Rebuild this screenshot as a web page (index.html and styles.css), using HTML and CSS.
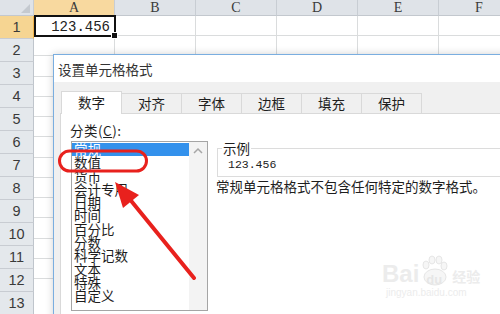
FILE: index.html
```html
<!DOCTYPE html>
<html lang="zh-CN">
<head>
    <meta charset="UTF-8">
    <meta name="viewport" content="width=device-width, initial-scale=1.0">
    <title>设置单元格格式</title>
    <link rel="stylesheet" href="styles.css">
</head>
<body>
    <!-- Worksheet behind the dialog -->
    <div class="sheet">
        <div class="corner"></div>
        <div class="colheads">
            <div class="colhead active">A</div>
            <div class="colhead">B</div>
            <div class="colhead">C</div>
            <div class="colhead">D</div>
            <div class="colhead">E</div>
            <div class="colhead">F</div>
        </div>
        <div class="rowheads">
            <div class="rowhead active">1</div>
            <div class="rowhead">2</div>
            <div class="rowhead">3</div>
            <div class="rowhead">4</div>
            <div class="rowhead">5</div>
            <div class="rowhead">6</div>
            <div class="rowhead">7</div>
            <div class="rowhead">8</div>
            <div class="rowhead">9</div>
            <div class="rowhead">10</div>
            <div class="rowhead">11</div>
            <div class="rowhead">12</div>
            <div class="rowhead">13</div>
            <div class="rowhead">14</div>
            <div class="rowhead">15</div>
        </div>
        <div class="cells">
            <div class="cell-sel">123.456<span class="handle"></span></div>
        </div>
    </div>

    <!-- Format cells dialog -->
    <div class="dialog">
        <div class="dlg-title">设置单元格格式</div>
        <div class="dlg-body">
            <div class="tabs">
                <div class="tab on">数字</div>
                <div class="tab">对齐</div>
                <div class="tab">字体</div>
                <div class="tab">边框</div>
                <div class="tab">填充</div>
                <div class="tab">保护</div>
            </div>
            <div class="panel">
                <div class="left-col">
                    <div class="label">分类(<u>C</u>):</div>
                    <div class="listbox">
                        <ul class="items">
                            <li class="sel">常规</li>
                            <li>数值</li>
                            <li>货币</li>
                            <li>会计专用</li>
                            <li>日期</li>
                            <li>时间</li>
                            <li>百分比</li>
                            <li>分数</li>
                            <li>科学记数</li>
                            <li>文本</li>
                            <li>特殊</li>
                            <li>自定义</li>
                        </ul>
                        <div class="scrollbar">
                            <svg width="18" height="16" viewBox="0 0 18 16">
                                <path d="M5 10 L9 6 L13 10" fill="none" stroke="#a6a6a6" stroke-width="1.5"/>
                            </svg>
                        </div>
                    </div>
                </div>
                <div class="right-col">
                    <fieldset class="sample">
                        <legend>示例</legend>
                        <div class="sample-val">123.456</div>
                    </fieldset>
                    <div class="desc">常规单元格格式不包含任何特定的数字格式。</div>
                </div>
            </div>
        </div>
    </div>

    <!-- Baidu watermark -->
    <div class="watermark">
        <div class="wm-top">
            <span class="wm-bai">Bai</span>
            <svg class="wm-paw" width="28" height="32" viewBox="0 0 28 32">
                <ellipse cx="6" cy="10" rx="3" ry="4" fill="#f6f6f6" stroke="#e6e6e6"/>
                <ellipse cx="12" cy="5" rx="3" ry="4" fill="#f6f6f6" stroke="#e6e6e6"/>
                <ellipse cx="19" cy="5" rx="3" ry="4" fill="#f6f6f6" stroke="#e6e6e6"/>
                <ellipse cx="24" cy="11" rx="3" ry="4" fill="#f6f6f6" stroke="#e6e6e6"/>
                <ellipse cx="15" cy="22" rx="11" ry="8" fill="#f6f6f6" stroke="#e6e6e6"/>
            </svg>
            <span class="wm-du">du</span>
            <span class="wm-jy">经验</span>
        </div>
        <div class="wm-url">jingyan.baidu.com</div>
    </div>

    <!-- Red annotation: ring round 数值 and the arrow pointing at it -->
    <svg class="marks" width="500" height="314" viewBox="0 0 500 314">
        <rect x="59.5" y="151" width="87" height="20" rx="10" ry="10" fill="none" stroke="#e8211d" stroke-width="3"/>
        <line x1="194" y1="278" x2="128" y2="197" stroke="#e8211d" stroke-width="4" stroke-linecap="round"/>
        <polygon points="115,182 139,195 123,208" fill="#e8211d"/>
    </svg>
</body>
</html>
```

FILE: styles.css
```css
body {
    margin: 0;
    padding: 0;
    overflow: hidden;
    background: #fff;
    width: 500px;
    height: 314px;
}

/* Worksheet */
.sheet {
    display: grid;
    grid-template-columns: 34px 1fr;
    grid-template-rows: 16px 1fr;
    height: 314px;
    overflow: hidden;
}

.corner {
    background: #dfe3e8;
    border-right: 1px solid #c8cdd3;
    border-bottom: 1px solid #c3c8ce;
    box-sizing: border-box;
    position: relative;
}

.corner::after {
    content: "";
    position: absolute;
    right: 3px;
    bottom: 2px;
    border-left: 9px solid transparent;
    border-bottom: 9px solid #c4c9cf;
}

.colheads {
    display: flex;
}

.colhead {
    flex: 0 0 81px;
    box-sizing: border-box;
    height: 16px;
    background: #dfe3e8;
    border-right: 1px solid #c8cdd3;
    border-bottom: 1px solid #c3c8ce;
    text-align: center;
    font-family: "Liberation Serif", serif;
    font-size: 14px;
    line-height: 16px;
    color: #3a3a3a;
}

.colhead.active {
    background: #f8d99f;
    border-bottom-color: #f0b24a;
}

.rowheads {
    display: flex;
    flex-direction: column;
}

.rowhead {
    flex: 0 0 20.25px;
    box-sizing: border-box;
    background: #e4e8ec;
    border-right: 1px solid #bfc5cc;
    border-bottom: 1px solid #c8ccd2;
    text-align: center;
    font-family: "Liberation Sans", sans-serif;
    font-size: 14.5px;
    line-height: 22px;
    color: #3a3a3a;
}

.rowhead.active {
    background: #f6d592;
    border-right-color: #f0b24a;
}

.cells {
    background:
        repeating-linear-gradient(to right, transparent 0 80px, #dadcdd 80px 81px),
        repeating-linear-gradient(to bottom, transparent 0 19.25px, #dadcdd 19.25px 20.25px);
}

.cell-sel {
    position: relative;
    width: 82px;
    height: 22px;
    margin-top: -1px;
    box-sizing: border-box;
    border: 2px solid #111;
    background: #fff;
    text-align: right;
    padding-right: 4px;
    font-family: "Liberation Mono", monospace;
    font-size: 14px;
    line-height: 20px;
    color: #222;
}

.handle {
    position: absolute;
    right: -4px;
    bottom: -4px;
    width: 5px;
    height: 5px;
    background: #111;
    border: 1px solid #fff;
}

/* Dialog */
.dialog {
    position: absolute;
    left: 53px;
    top: 54px;
    width: 480px;
    height: 290px;
    border: 1px solid #7aaee0;
    background: #f0f0f0;
    box-shadow: 0 0 8px rgba(0, 0, 0, 0.18);
    font-family: "Noto Sans CJK SC", sans-serif;
    font-size: 13.5px;
    color: #1e1e1e;
}

.dlg-title {
    height: 27px;
    line-height: 28px;
    padding-left: 4px;
    background: #fff;
    color: #333;
}

.dlg-body {
    padding: 11px 0 0 6px;
}

.tabs {
    display: flex;
    align-items: flex-start;
    height: 20px;
    margin-left: 1px;
    position: relative;
    z-index: 1;
}

.tab {
    flex: 0 0 61px;
    box-sizing: border-box;
    height: 20px;
    margin-right: -1px;
    border: 1px solid #d9d9d9;
    border-bottom: none;
    background: #f0f0f0;
    text-align: center;
    line-height: 19px;
}

.tab.on {
    height: 23px;
    margin-top: -2px;
    background: #fff;
    line-height: 21px;
    position: relative;
    z-index: 2;
}

.panel {
    display: flex;
    height: 220px;
    background: #fff;
    border: 1px solid #d9d9d9;
    padding: 8px 0 0 9px;
}

.label {
    line-height: 16px;
    letter-spacing: 0.5px;
}

.listbox {
    display: flex;
    width: 137px;
    height: 170px;
    margin: 3px 0 0 1px;
    box-sizing: border-box;
    border: 1px solid #a5a5a5;
    overflow: hidden;
}

.items {
    flex: 1;
    list-style: none;
    margin: 0;
    padding: 1px 0 0 0;
}

.items li {
    height: 13.3px;
    line-height: 13.3px;
    padding-left: 2px;
    white-space: nowrap;
}

.items li.sel {
    background: #3391ec;
    color: #fff;
}

.scrollbar {
    flex: 0 0 18px;
    background: #f3f3f3;
    padding-top: 1px;
}

.right-col {
    margin: 18px 0 0 8px;
}

.sample {
    width: 300px;
    margin: 0 0 0 1px;
    padding: 2px 4px 4px 4px;
    border: 1px solid #dcdcdc;
}

.sample legend {
    padding: 0 1px;
    line-height: 16px;
}

.sample-val {
    padding-left: 6px;
    font-family: "Liberation Mono", monospace;
    font-size: 11.5px;
    line-height: 14px;
    color: #222;
}

.desc {
    margin-top: 2px;
    line-height: 14px;
    white-space: nowrap;
}

/* Watermark */
.watermark {
    position: absolute;
    left: 382px;
    top: 253px;
    color: #ececec;
    font-family: "Liberation Sans", sans-serif;
}

.wm-top {
    display: flex;
    align-items: flex-end;
    height: 34px;
}

.wm-bai {
    font-size: 24px;
    font-weight: bold;
    line-height: 26px;
}

.wm-paw {
    margin-left: 1px;
}

.wm-du {
    font-size: 13px;
    font-weight: bold;
    margin-left: -22px;
    margin-right: 10px;
    line-height: 14px;
    color: #e6e6e6;
}

.wm-jy {
    font-family: "Noto Sans CJK SC", sans-serif;
    font-size: 14px;
    font-weight: bold;
    line-height: 22px;
}

.wm-url {
    font-size: 10px;
    line-height: 12px;
    margin-left: 4px;
}

/* Annotation overlay */
.marks {
    position: absolute;
    left: 0;
    top: 0;
    pointer-events: none;
}
```
